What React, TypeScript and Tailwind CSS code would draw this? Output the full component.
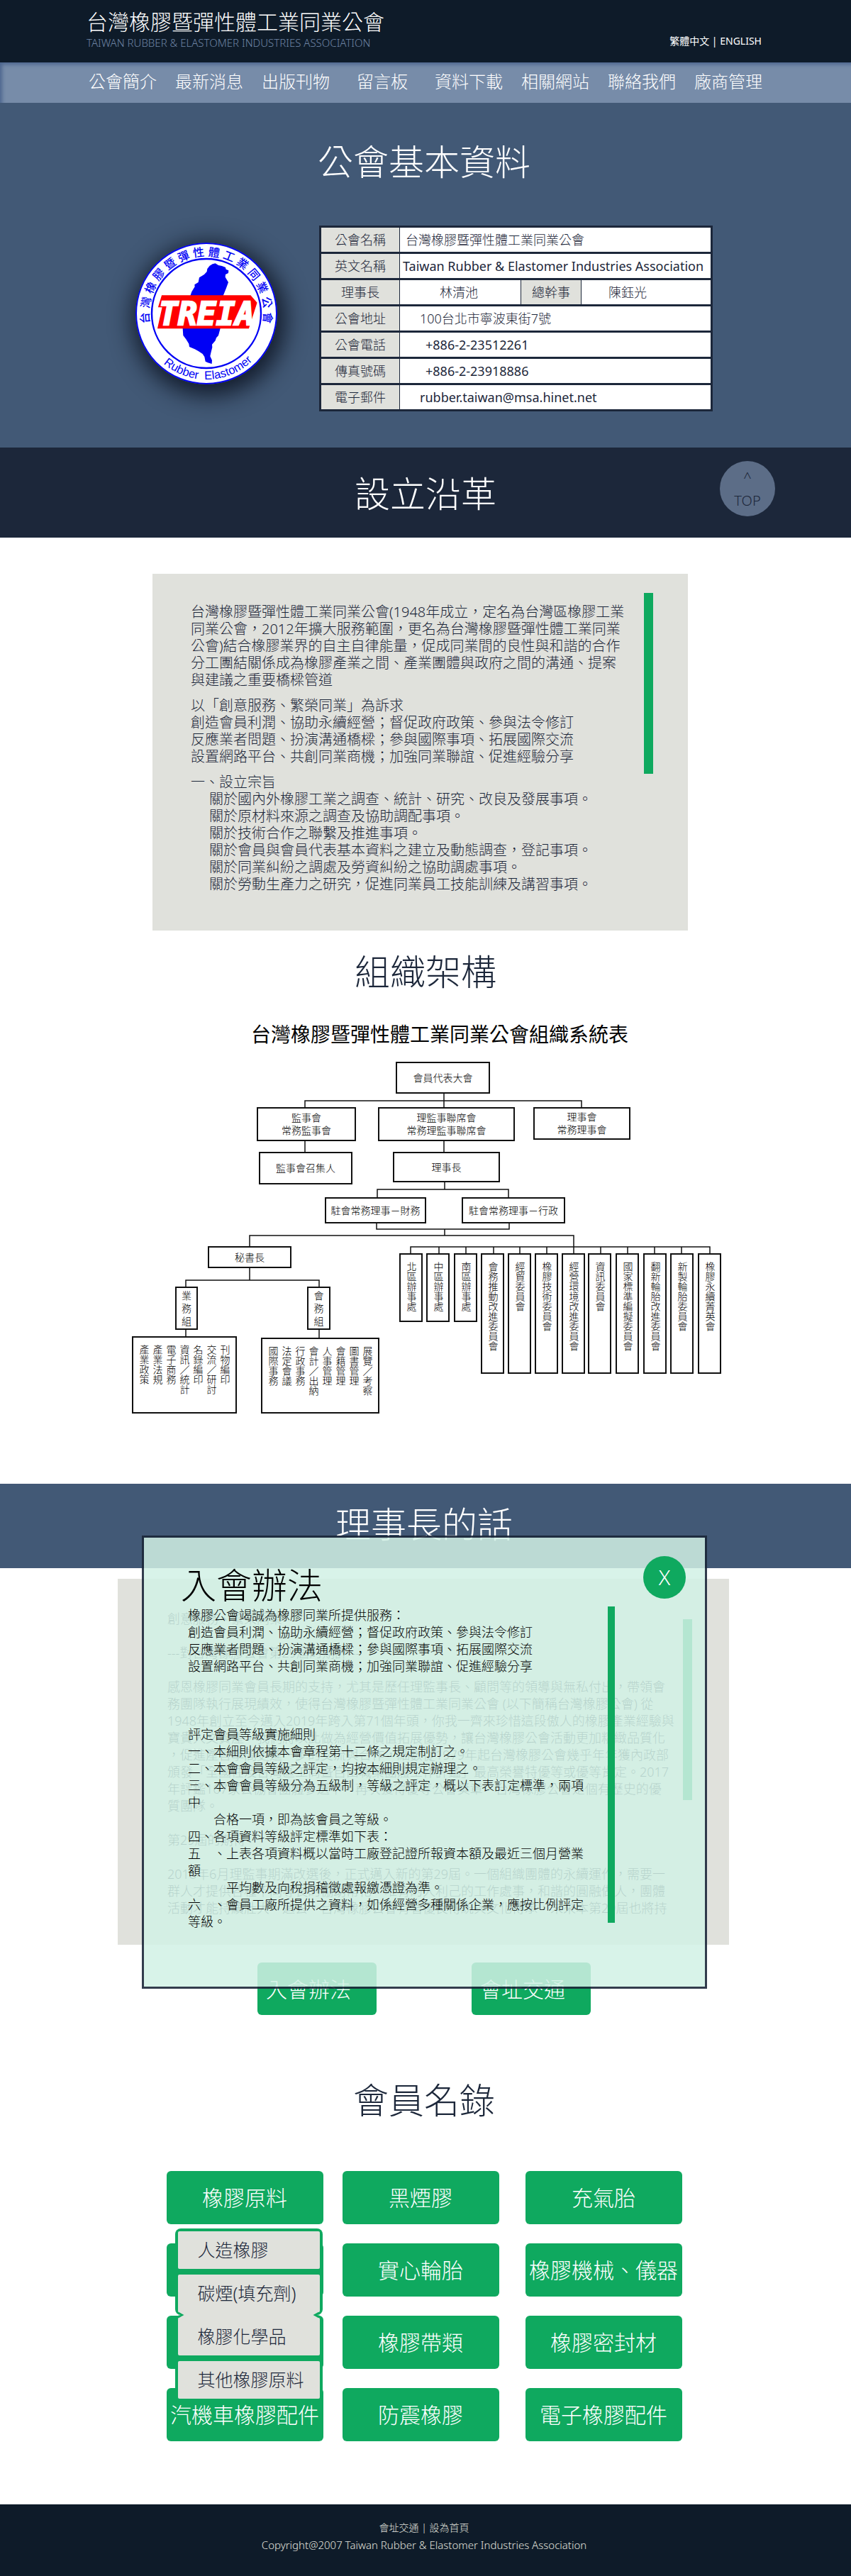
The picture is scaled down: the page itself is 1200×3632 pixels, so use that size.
import React from "react";

const navItems = ["公會簡介", "最新消息", "出版刊物", "留言板", "資料下載", "相關網站", "聯絡我們", "廠商管理"];

const purposes = [
  "關於國內外橡膠工業之調查、統計、研究、改良及發展事項。",
  "關於原材料來源之調查及協助調配事項。",
  "關於技術合作之聯繫及推進事項。",
  "關於會員與會員代表基本資料之建立及動態調查，登記事項。",
  "關於同業糾紛之調處及勞資糾紛之協助調處事項。",
  "關於勞動生產力之研究，促進同業員工技能訓練及講習事項。",
];

const historyLines = [
  "台灣橡膠暨彈性體工業同業公會(1948年成立，定名為台灣區橡膠工業",
  "同業公會，2012年擴大服務範圍，更名為台灣橡膠暨彈性體工業同業",
  "公會)結合橡膠業界的自主自律能量，促成同業間的良性與和諧的合作",
  "分工團結關係成為橡膠產業之間、產業團體與政府之間的溝通、提案",
  "與建議之重要橋樑管道",
];

const sloganLines = [
  "以「創意服務、繁榮同業」為訴求",
  "創造會員利潤、協助永續經營；督促政府政策、參與法令修訂",
  "反應業者問題、扮演溝通橋樑；參與國際事項、拓展國際交流",
  "設置網路平台、共創同業商機；加強同業聯誼、促進經驗分享",
];

const chairmanLines = [
  "創意服務、繁榮同業",
  "",
  "---對台灣橡膠公會第29屆的期許---",
  "",
  "感恩橡膠同業會員長期的支持，尤其是歷任理監事長、顧問等的領導與無私付出，帶領會",
  "務團隊執行展現績效，使得台灣橡膠暨彈性體工業同業公會 (以下簡稱台灣橡膠公會) 從",
  "1948年創立至今邁入2019年跨入第71個年頭，你我一齊來珍惜這段傲人的橡膠產業經驗與",
  "寶貴人文資產，我們將以此做為經營價值拓展優勢，讓台灣橡膠公會活動更加精緻品質化",
  "，促進產官學間更進一步的交流與合作，細數從1979年起台灣橡膠公會幾乎年年獲內政部",
  "頒發「全國性及台灣區工商暨自由職業團體工作評鑑」最高榮譽特優等或優等肯定。2017",
  "年評鑑167家公協會團體參選中，再次獲得優等公會獎章，台灣橡膠公會是個有歷史的優",
  "質團隊。",
  "",
  "第29屆的期待",
  "",
  "2018年6月理監事期滿改選後，正式邁入新的第29屆。一個組織團體的永續運作，需要一",
  "群人才提供各種不同專長的協助常化，唯有的人利己的工作處事，和諧的圓融做人，團體",
  "活動才能持續壯大。過去，台灣橡膠公會有著優良傳統與文化傳承，未來本第29屆也將持",
];

const dialogLines = [
  "橡膠公會竭誠為橡膠同業所提供服務：",
  "創造會員利潤、協助永續經營；督促政府政策、參與法令修訂",
  "反應業者問題、扮演溝通橋樑；參與國際事項、拓展國際交流",
  "設置網路平台、共創同業商機；加強同業聯誼、促進經驗分享",
  "",
  "",
  "",
  "評定會員等級實施細則",
  "一、本細則依據本會章程第十二條之規定制訂之。",
  "二、本會會員等級之評定，均按本細則規定辦理之。",
  "三、本會會員等級分為五級制，等級之評定，概以下表訂定標準，兩項",
  "中",
  "　　合格一項，即為該會員之等級。",
  "四、各項資料等級評定標準如下表：",
  "五　、上表各項資料概以當時工廠登記證所報資本額及最近三個月營業",
  "額",
  "　　　平均數及向稅捐稽徵處報繳憑證為準。",
  "六　、會員工廠所提供之資料，如係經營多種關係企業，應按比例評定",
  "等級。",
];

const categories = [
  "橡膠原料", "黑煙膠", "充氣胎",
  "", "實心輪胎", "橡膠機械、儀器",
  "", "橡膠帶類", "橡膠密封材",
  "汽機車橡膠配件", "防震橡膠", "電子橡膠配件",
];

type Node = { x: number; y: number; w: number; h: number; lines: string[]; kind?: "column" | "list" };

const nodes: Node[] = [
  { x: 374, y: 0, w: 133, h: 45, lines: ["會員代表大會"] },
  { x: 178, y: 64, w: 140, h: 48, lines: ["監事會", "常務監事會"] },
  { x: 349, y: 64, w: 193, h: 48, lines: ["理監事聯席會", "常務理監事聯席會"] },
  { x: 568, y: 64, w: 137, h: 46, lines: ["理事會", "常務理事會"] },
  { x: 181, y: 127, w: 132, h: 46, lines: ["監事會召集人"] },
  { x: 370, y: 127, w: 151, h: 43, lines: ["理事長"] },
  { x: 274, y: 191, w: 143, h: 37, lines: ["駐會常務理事－財務"] },
  { x: 467, y: 191, w: 146, h: 37, lines: ["駐會常務理事－行政"] },
  { x: 109, y: 260, w: 118, h: 31, lines: ["秘書長"] },
  { x: 63, y: 317, w: 32, h: 61, lines: ["業", "務", "組"] },
  { x: 249, y: 317, w: 33, h: 61, lines: ["會", "務", "組"] },
  { x: 2, y: 387, w: 148, h: 109, lines: ["刊物編印", "交流／研討", "名錄編印", "資訊／統計", "電子商務", "產業法規", "產業政策"], kind: "list" },
  { x: 184, y: 389, w: 167, h: 107, lines: ["展覽／考察", "圖書管理", "會籍管理", "人事管理", "會計／出納", "行政事務", "法定會議", "國際事務"], kind: "list" },
];

const committees: [number, string][] = [
  [379, "北區辦事處"], [417, "中區辦事處"], [456, "南區辦事處"], [494, "會務推動改進委員會"],
  [532, "經貿委員會"], [570, "橡膠技術委員會"], [608, "經營環境改進委員會"], [645, "資訊委員會"],
  [684, "國家標準編擬委員會"], [723, "翻新輪胎改進委員會"], [761, "新製輪胎委員會"], [800, "橡膠永續菁英會"],
];

committees.forEach(([x, label], i) => {
  nodes.push({ x, y: 270, w: 33, h: i < 3 ? 97 : 170, lines: [label], kind: "column" });
});

const connectors =
  "M442 45V64 M246 64V55H636V64 M246 112V127 M442 112V127 M443 170V180 M348 191V180H533V191 " +
  "M347 228V236H534V228 M443 236V245 M168 260V245H625V270 M168 291V308 M78 317V308H266V317 " +
  "M78 378V387 M266 378V389 M395 270V261H817V270 " +
  "M435 261V270 M473 261V270 M512 261V270 M549 261V270 M587 261V270 M663 261V270 M701 261V270 M739 261V270 M777 261V270";

function OrgChart() {
  return (
    <div className="relative mx-auto mt-[23px] h-[496px] w-[832px] text-sm text-black">
      <svg className="absolute inset-0 h-full w-full" viewBox="0 0 832 496" fill="none" aria-hidden="true">
        <path d={connectors} stroke="#111" strokeWidth="1.5" />
      </svg>
      {nodes.map((n, i) => {
        const box = { left: n.x, top: n.y, width: n.w, height: n.h };
        if (n.kind === "column")
          return (
            <div key={i} style={box} className="absolute flex items-center justify-start border-2 border-[#111] bg-white pt-2.5 leading-4 [text-orientation:upright] [writing-mode:vertical-rl]">
              <div className="h-full">{n.lines[0]}</div>
            </div>
          );
        if (n.kind === "list")
          return (
            <div key={i} style={box} className="absolute flex flex-col items-center border-2 border-[#111] bg-white pt-2.5 leading-[19px] [text-orientation:upright] [writing-mode:vertical-rl]">
              <div className="m-auto h-full">
                {n.lines.map((l) => (
                  <div key={l}>{l}</div>
                ))}
              </div>
            </div>
          );
        return (
          <div key={i} style={box} className="absolute flex flex-col items-center justify-center border-2 border-[#111] bg-white leading-[18px]">
            {n.lines.map((l) => (
              <div key={l}>{l}</div>
            ))}
          </div>
        );
      })}
    </div>
  );
}

const sealChars = Array.from("台灣橡膠暨彈性體工業同業公會");

function Seal() {
  return (
    <svg viewBox="0 0 200 200" className="mt-6 h-[200px] w-[200px] shrink-0 rounded-full shadow-[4px_8px_32px_8px_rgba(10,18,32,0.85)]" role="img" aria-label="TREIA">
      <circle cx="100" cy="100" r="99" fill="#fff" stroke="#0000f5" strokeWidth="2" />
      <circle cx="100" cy="100" r="77" fill="none" stroke="#0000f5" strokeWidth="2.4" />
      <g fill="#0000f5">
        {sealChars.map((c, i) => (
          <text key={i} x="100" y="19" fontSize="16" fontWeight="500" textAnchor="middle" transform={`rotate(${-94 + (i * 188) / 13} 100 100)`}>
            {c}
          </text>
        ))}
        <path id="seal-arc" d="M7 100A93 93 0 0 0 193 100" fill="none" />
        <text fontFamily="Liberation Sans" fontSize="16.5" xmlSpace="preserve">
          <textPath href="#seal-arc" startOffset="51%" textAnchor="middle">{"Rubber\u00a0 Elastomer"}</textPath>
        </text>
      </g>
      <g transform="scale(0.3333) translate(-34 -37)">
        <path
          fill="#0000f5"
          d="M348 135L360 128L372 125L385 133L400 136L415 142L417 150L428 155L427 166L415 172L414 183L427 205L418 230L405 262H266L272 245L285 224L284 215L300 205L304 185L325 172L336 160L338 148Z"
        />
        <path
          fill="#0000f5"
          d="M234 400H393L385 430L376 440L372 452L358 468L359 480L354 500L350 518L358 535L357 550L340 545L330 540L326 520L318 508L300 496L285 488L262 478L260 465L248 446L236 430Z"
        />
        <path d="M147 262H520L546 292L512 398H130L150 308H133Z" fill="#f00" stroke="#f00" strokeWidth="5" />
        <text x="335" y="384" textAnchor="middle" fontFamily="DejaVu Sans Mono" fontWeight="700" fontStyle="italic" fontSize="134" fill="#fff" stroke="#fff" strokeWidth="7">
          TREIA
        </text>
      </g>
    </svg>
  );
}

const th = "border-r border-[#1c273a] bg-[#e0e1dc] p-0 text-center font-light";

function InfoTable() {
  const row = "h-[37px] border-y-[3px] border-[#1c273a]";
  return (
    <table className="min-w-0 flex-1 table-fixed border-collapse border-[3px] border-[#1c273a] bg-white text-lg leading-6 text-[#1c273a]">
      <colgroup>
        <col className="w-[112px]" />
        <col className="w-[171px]" />
        <col className="w-[85px]" />
        <col />
      </colgroup>
      <tbody>
        <tr className={row}>
          <th scope="row" className={th}>公會名稱</th>
          <td colSpan={3} className="p-0 pl-2">台灣橡膠暨彈性體工業同業公會</td>
        </tr>
        <tr className={row}>
          <th scope="row" className={th}>英文名稱</th>
          <td colSpan={3} className="whitespace-nowrap p-0 pl-1 font-normal">Taiwan Rubber &amp; Elastomer Industries Association</td>
        </tr>
        <tr className={row}>
          <th scope="row" className={th}>理事長</th>
          <td className="p-0 pl-14">林清池</td>
          <th scope="row" className="border-x border-[#1c273a] bg-[#e0e1dc] p-0 text-center font-light">總幹事</th>
          <td className="p-0 pl-[38px]">陳鈺光</td>
        </tr>
        <tr className={row}>
          <th scope="row" className={th}>公會地址</th>
          <td colSpan={3} className="p-0 pl-7">100台北市寧波東街7號</td>
        </tr>
        <tr className={row}>
          <th scope="row" className={th}>公會電話</th>
          <td colSpan={3} className="p-0 pl-9 font-normal">+886-2-23512261</td>
        </tr>
        <tr className={row}>
          <th scope="row" className={th}>傳真號碼</th>
          <td colSpan={3} className="p-0 pl-9 font-normal">+886-2-23918886</td>
        </tr>
        <tr className={row}>
          <th scope="row" className={th}>電子郵件</th>
          <td colSpan={3} className="p-0 pl-7 font-normal">rubber.taiwan@msa.hinet.net</td>
        </tr>
      </tbody>
    </table>
  );
}

function MenuPair({ items }: { items: string[] }) {
  return (
    <div className="flex flex-col gap-2 rounded-lg bg-[#0fa95f] p-1">
      {items.map((label) => (
        <button key={label} type="button" className="h-[53px] rounded-xs bg-[#e0e1dc] pl-7 text-left text-[25px] leading-none text-[#1c273a]">
          {label}
        </button>
      ))}
    </div>
  );
}

function MembershipDialog() {
  return (
    <div role="dialog" aria-labelledby="join-title" className="absolute left-0 right-[3px] top-[73px] z-10 mx-auto h-[639px] max-w-[797px] border-[3px] border-[#1c273a]/90 bg-[#d1f1e5]/85 bg-clip-padding pt-[37px] text-black">
      <h2 id="join-title" className="pl-[52px] text-[50px] font-light leading-[60px]">入會辦法</h2>
      <button type="button" className="absolute right-[27px] top-[26px] size-[60px] rounded-full bg-[#0fa95f] text-3xl font-light text-white">X</button>
      <div className="flex justify-between pl-[62px] pr-[127px]">
        <div className="whitespace-pre text-lg leading-6">
          {dialogLines.map((l, i) => (
            <p key={i} className="h-6">{l}</p>
          ))}
        </div>
        <div className="h-[446px] w-2.5 bg-[#0fa95f]" />
      </div>
    </div>
  );
}

export default function App() {
  return (
    <div lang="zh-Hant" className="min-w-[1000px] bg-white font-['Noto_Sans','Noto_Sans_CJK_TC',sans-serif] font-light text-[#1c273a]">
      <header className="bg-[#0e1b29]">
        <div className="flex h-[88px] justify-between px-[122px] pt-3">
          <div>
            <h1 className="text-[30px] leading-[38px] text-white">台灣橡膠暨彈性體工業同業公會</h1>
            <p className="text-[15px] leading-5 text-[#6f85a5]">TAIWAN RUBBER &amp; ELASTOMER INDUSTRIES ASSOCIATION</p>
          </div>
          <div className="pr-1 pt-9 text-sm font-normal leading-5 text-white">
            <a href="#zh">繁體中文</a> | <a href="#en">ENGLISH</a>
          </div>
        </div>
        <nav className="grid h-[57px] grid-cols-8 items-center bg-[#778ca9] px-28 pb-1 text-center text-2xl leading-8 text-white shadow-[inset_4px_4px_5px_-1px_#4e678f]">
          {navItems.map((n) => (
            <a key={n} href="#top">{n}</a>
          ))}
        </nav>
      </header>

      <section className="bg-[#425976] pb-[51px] pr-1 pt-[53px]">
        <h2 className="text-center text-[50px] leading-[60px] text-white">公會基本資料</h2>
        <div className="mx-auto mt-[60px] flex max-w-[814px] items-start gap-[59px]">
          <Seal />
          <InfoTable />
        </div>
      </section>

      <section className="relative bg-[#1c273a] pb-8 pt-[35px]">
        <h2 className="text-center text-[50px] leading-[60px] text-white">設立沿革</h2>
        <a href="#top" className="absolute right-[107px] top-[19px] flex size-[78px] flex-col items-center rounded-full bg-[#5c6d87] pt-2 text-xl leading-8 text-[#1c273a]">
          <span>^</span>
          <span>TOP</span>
        </a>
      </section>

      <section className="pb-[99px] pt-[51px]">
        <div className="pr-[15px]">
          <div className="mx-auto flex h-[503px] max-w-[755px] justify-between bg-[#e0e1dc] pl-[54px] pr-[49px]">
            <div className="space-y-3 whitespace-nowrap pt-[42px] text-xl leading-6">
              <div>
                {historyLines.map((l) => (
                  <p key={l}>{l}</p>
                ))}
              </div>
              <div>
                {sloganLines.map((l) => (
                  <p key={l}>{l}</p>
                ))}
              </div>
              <div>
                <p>一、設立宗旨</p>
                <ul className="pl-[26px]">
                  {purposes.map((l) => (
                    <li key={l}>{l}</li>
                  ))}
                </ul>
              </div>
            </div>
            <div className="mt-[27px] h-[255px] w-[13px] shrink-0 bg-[#0fa95f]" />
          </div>
        </div>
        <h2 className="mt-7 text-center text-[50px] leading-[60px]">組織架構</h2>
        <h3 className="mt-[42px] pl-10 text-center text-[28px] font-normal leading-8 text-black">台灣橡膠暨彈性體工業同業公會組織系統表</h3>
        <OrgChart />
      </section>

      <section className="relative">
        <h2 className="bg-[#425976] pb-8 pr-1 pt-[27px] text-center text-[50px] leading-[60px] text-white">理事長的話</h2>
        <div className="mt-[15px] pr-1.5">
          <div className="mx-auto flex h-[516px] max-w-[862px] justify-between bg-[#e0e1dc] pl-[70px] pr-[52px]">
            <div className="whitespace-nowrap pt-11 text-lg leading-6">
              {chairmanLines.map((l, i) => (
                <p key={i} className="h-6">{l}</p>
              ))}
            </div>
            <div className="mt-[57px] h-[255px] w-[13px] shrink-0 bg-[#0fa95f]" />
          </div>
        </div>
        <div className="mt-[25px] flex justify-center gap-[134px] pr-1 text-[30px] text-white">
          <button type="button" className="h-[74px] w-[168px] rounded-md bg-[#0fa95f] pl-3 text-left">入會辦法</button>
          <button type="button" className="h-[74px] w-[168px] rounded-md bg-[#0fa95f] pl-3 text-left">會址交通</button>
        </div>
        <MembershipDialog />
      </section>

      <section className="pb-[89px] pr-1 pt-[90px]">
        <h2 className="text-center text-[50px] leading-[60px]">會員名錄</h2>
        <div className="relative mx-auto mt-[70px] grid w-[727px] grid-cols-[248px_258px_221px] gap-y-[27px] text-[30px] text-white">
          {categories.map((c, i) => (
            <button key={i} type="button" aria-label={c || "會員分類"} className="h-[75px] w-[221px] whitespace-nowrap rounded-md bg-[#0fa95f] leading-none">
              {c}
            </button>
          ))}
          <div className="absolute left-3 top-[81px] flex w-[208px] flex-col">
            <MenuPair items={["人造橡膠", "碳煙(填充劑)"]} />
            <MenuPair items={["橡膠化學品", "其他橡膠原料"]} />
            <div className="absolute inset-x-1 top-[117px] h-2.5 bg-[#e0e1dc] [clip-path:polygon(0_0,100%_0,calc(100%-9px)_50%,100%_100%,0_100%,9px_50%)]" />
          </div>
        </div>
      </section>

      <footer className="bg-[#0e1b29] pb-8 pr-1 pt-[21px] text-center text-[#e0e1dc]">
        <p className="text-[14px] leading-6">
          <a href="#map">會址交通</a> | <a href="#home">設為首頁</a>
        </p>
        <p className="text-[15px] leading-6">Copyright@2007 Taiwan Rubber &amp; Elastomer Industries Association</p>
      </footer>
    </div>
  );
}
